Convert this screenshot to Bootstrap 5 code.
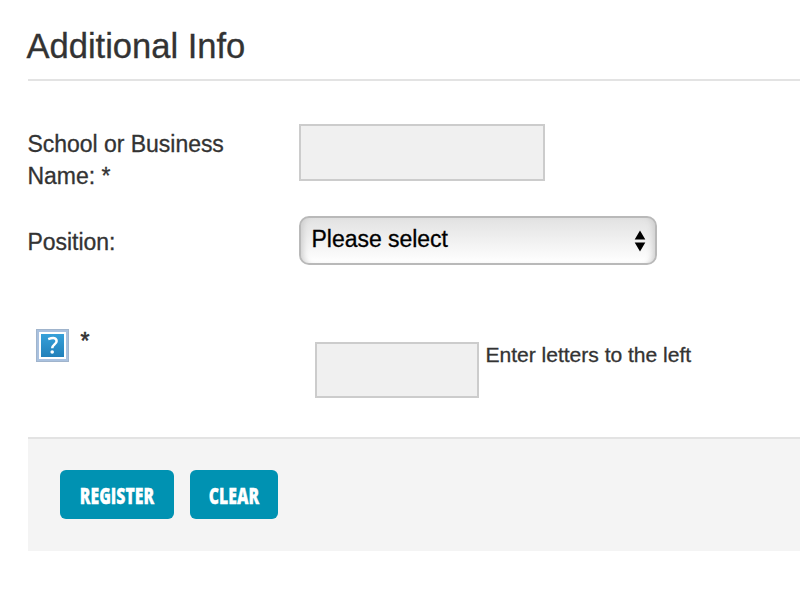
<!DOCTYPE html>
<html lang="en">
<head>
<meta charset="utf-8">
<meta name="viewport" content="width=device-width, initial-scale=1">
<title>Additional Info</title>
<link href="https://cdn.jsdelivr.net/npm/bootstrap@5.3.0/dist/css/bootstrap.min.css" rel="stylesheet">
<style>
  body { font-family: "Liberation Sans", Arial, sans-serif; font-size: 23px; letter-spacing: -.03px; line-height: 32px; color: #333; overflow: hidden; -webkit-text-stroke: .3px; }
  .page { padding: 26px 0 0 27.5px; }
  .section-title { font-size: 34.6px; line-height: 40px; height: 53px; margin-left: -1px; color: #333; font-weight: 400; }
  .rule { height: 2px; background: #e3e3e3; }
  .label-col { width: 271px; flex: none; }
  .name-row { margin-top: 43px; height: 92px; }
  .name-label { padding-top: 4px; }
  .position-row { height: 113px; }
  .position-label { padding-top: 10px; }
  .field { background: #f0f0f0; border: 2px solid #ccc; border-radius: 0; padding: 0 10px; }
  .field-name { width: 246px; height: 57px; }
  .field-code { width: 164px; height: 56px; }
  .picker { width: 358px; height: 49px; border: 2px solid #b9b9b9; border-radius: 10px; color: #000; padding: 0 9px 3px 11px;
    background: linear-gradient(#e2e2e2, #f2f2f2 55%, #fff);
    box-shadow: inset 7px 0 6px -5px #cbcbcb, inset -7px 0 6px -5px #cbcbcb; }
  .hint { font-size: 21.1px; margin-left: 7px; line-height: 25px; }
  .code-row { height: 108px; }
  .code-group { padding-top: 13px; }
  .help-icon { margin-left: 8px; }
  .required-mark { margin: -4px 0 0 12px; -webkit-text-stroke: .6px; }
  .actions { background: #f4f4f4; border-top: 2px solid #e3e3e3; height: 114px; padding: 31px 0 0 32px; }
  .btn-teal, .btn-teal:hover { background: #0092b2; color: #fff; border: 0; border-radius: 6px; height: 49px; padding: 1px 0 0; font: 800 22.6px/47px "Open Sans", sans-serif; }
  .btn-teal span { display: block; margin: 0 -20px; transform: scaleX(.70); }
  .btn-register { width: 114px; }
  .btn-clear { width: 88px; }
</style>
</head>
<body class="bg-white">
<form class="page" onsubmit="return false">
  <h1 class="section-title mb-0">Additional Info</h1>
  <div class="rule"></div>
  <div class="name-row d-flex align-items-start">
    <label class="label-col name-label" for="name">School or Business<br>Name: *</label>
    <input id="name" class="field field-name" type="text">
  </div>
  <div class="position-row d-flex align-items-start">
    <div class="label-col position-label">Position:</div>
    <div class="picker d-flex align-items-center justify-content-between" role="combobox" aria-label="Position">
      <span>Please select</span>
      <svg width="12" height="22" viewBox="0 0 12 22" class="mt-1"><path d="M6 0.5 11.3 9.5H.7zM6 21.5 11.3 12.5H.7z"/></svg>
    </div>
  </div>
  <div class="code-row d-flex align-items-start">
    <div class="label-col d-flex align-items-start">
      <svg class="help-icon" width="33" height="33" viewBox="0 0 33 33" role="img" aria-label="Help">
        <defs><linearGradient id="blue" x1="0" y1="0" x2="0" y2="1"><stop stop-color="#36a0d9"/><stop offset="1" stop-color="#2180ba"/></linearGradient></defs>
        <path fill="#a0b4cc" d="M0 0h33v33H0z"/><path fill="#a9c1df" d="M1 1h31v31H1z"/>
        <path fill="#fff" d="M3 3h27v27H3z"/><path fill="url(#blue)" d="M5 5h23v23H5z"/>
        <path d="M12.2 10.2Q20.4 7.2 20.6 12.2c0 3-4.4 3.5-4.4 7" fill="none" stroke="#fff" stroke-width="2.5"/><circle cx="16.2" cy="23" r="1.8" fill="#fff"/>
      </svg>
      <span class="required-mark">*</span>
    </div>
    <div class="code-group d-flex align-items-start ms-3">
      <input class="field field-code" type="text" aria-label="Letters">
      <span class="hint">Enter letters to the left</span>
    </div>
  </div>
  <div class="actions d-flex gap-3">
    <button type="submit" class="btn btn-teal btn-register"><span>REGISTER</span></button>
    <button type="reset" class="btn btn-teal btn-clear"><span>CLEAR</span></button>
  </div>
</form>
<script src="https://cdn.jsdelivr.net/npm/bootstrap@5.3.0/dist/js/bootstrap.bundle.min.js"></script>
</body>
</html>
